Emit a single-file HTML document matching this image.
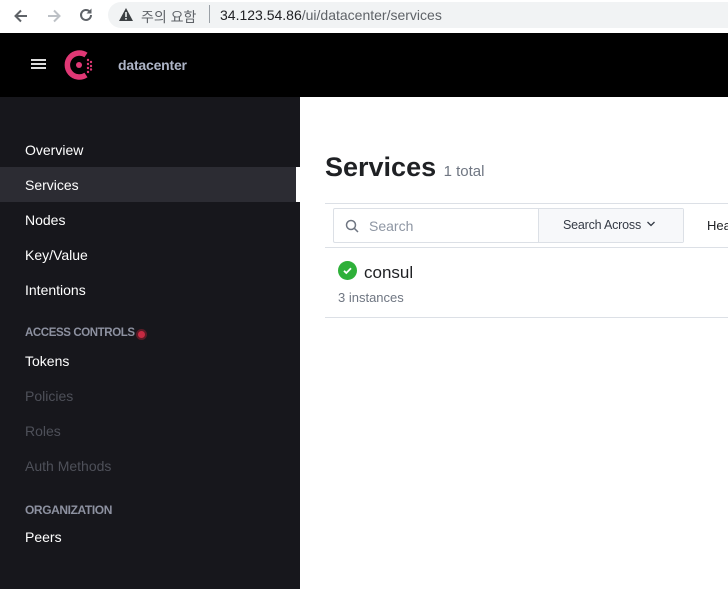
<!DOCTYPE html>
<html><head><meta charset="utf-8"><style>
*{margin:0;padding:0;box-sizing:border-box}
body{width:728px;height:589px;overflow:hidden;font-family:"Liberation Sans","Noto Sans CJK KR",sans-serif;background:#fff;position:relative}
.bar{position:absolute;left:0;top:0;width:728px;height:33px;background:#fff}
.url{position:absolute;left:108px;top:2px;width:640px;height:26px;background:#f1f3f4;border-radius:14px}
.hdr{position:absolute;left:0;top:33px;width:728px;height:64px;background:#000}
.side{position:absolute;left:0;top:97px;width:300px;height:492px;background:#17171c}
.nav{position:absolute;left:25px;font-size:14px;color:#fff}
.dim{color:#4e5059}
.sec{position:absolute;left:25px;font-size:12px;color:#8d91a0;font-weight:bold;letter-spacing:-0.4px}
.t{position:absolute;white-space:nowrap}
</style></head><body>
<div class="bar">
<svg class="t" style="left:12px;top:7px" width="18" height="18" viewBox="0 0 18 18"><path d="M15 9H4M9 3.5L3.5 9 9 14.5" stroke="#5f6368" stroke-width="2" fill="none"/></svg>
<svg class="t" style="left:45px;top:7px" width="18" height="18" viewBox="0 0 18 18"><path d="M3 9h11M9 3.5L14.5 9 9 14.5" stroke="#bdc1c6" stroke-width="2" fill="none"/></svg>
<svg class="t" style="left:77px;top:6px" width="18" height="18" viewBox="0 0 18 18"><path d="M14 9a5 5 0 1 1-1.5-3.6" stroke="#5f6368" stroke-width="2" fill="none"/><path d="M14.5 2.5v5h-5z" fill="#5f6368"/></svg>
<div class="url"></div>
<svg class="t" style="left:118px;top:7px" width="16" height="15" viewBox="0 0 16 15"><path d="M8 1L15 14H1z" fill="#3c4043"/><rect x="7.2" y="5" width="1.6" height="5" fill="#f1f3f4"/><rect x="7.2" y="11" width="1.6" height="1.6" fill="#f1f3f4"/></svg>
<div class="t" style="left:141px;top:7px;font-size:14px;color:#5f6368">주의 요함</div>
<div class="t" style="left:209px;top:5px;width:1px;height:18px;background:#9aa0a6"></div>
<div class="t" style="left:220px;top:7px;font-size:14px;color:#202124">34.123.54.86<span style="color:#5f6368">/ui/datacenter/services</span></div>
</div>
<div class="hdr">
<div class="t" style="left:31px;top:26px;width:15px;height:2px;background:#ddd;box-shadow:0 4px 0 #ddd,0 8px 0 #ddd"></div>
<svg class="t" style="left:63px;top:15px" width="34" height="34" viewBox="0 0 34 34"><path d="M23 7A12 12 0 1 0 23 27" stroke="#e03875" stroke-width="5.5" fill="none"/><circle cx="16" cy="17" r="3" fill="#e03875"/><g fill="#e03875"><circle cx="25" cy="12" r="1.2"/><circle cx="28" cy="14" r="1.2"/><circle cx="25" cy="16" r="1.2"/><circle cx="28" cy="18" r="1.2"/><circle cx="25" cy="20" r="1.2"/><circle cx="28" cy="21.5" r="1.2"/><circle cx="25" cy="24" r="1.2"/></g></svg>
<div class="t" style="left:118px;top:24px;font-size:14px;color:#aeb5c7;font-weight:bold;letter-spacing:-0.2px">datacenter</div>
</div>
<div class="side">
<div class="t" style="left:0;top:70px;width:296px;height:35px;background:#2c2c33"></div>
<div class="t" style="left:296px;top:70px;width:4px;height:35px;background:#fff"></div>
<div class="nav" style="top:45px">Overview</div>
<div class="nav" style="top:80px">Services</div>
<div class="nav" style="top:115px">Nodes</div>
<div class="nav" style="top:150px">Key/Value</div>
<div class="nav" style="top:185px">Intentions</div>
<div class="sec" style="top:230px;font-size:11.5px">ACCESS CONTROLS</div>
<div class="t" style="left:136px;top:232px;width:11px;height:11px;border-radius:50%;background:#c62a42;border:2px solid #5a1b26"></div>
<div class="nav" style="top:256px">Tokens</div>
<div class="nav dim" style="top:291px">Policies</div>
<div class="nav dim" style="top:326px">Roles</div>
<div class="nav dim" style="top:361px">Auth Methods</div>
<div class="sec" style="top:406px">ORGANIZATION</div>
<div class="nav" style="top:432px">Peers</div>
</div>
<div class="t" style="left:325px;top:152px;font-size:27px;font-weight:bold;color:#1f2124">Services <span style="font-size:15px;font-weight:normal;color:#6f7682">1 total</span></div>
<div class="t" style="left:325px;top:203px;width:403px;height:1px;background:#dce0e6"></div>
<div class="t" style="left:333px;top:208px;width:351px;height:35px;border:1px solid #dce0e6;border-radius:2px"></div>
<div class="t" style="left:538px;top:209px;width:145px;height:33px;background:#f7f8fa;border-left:1px solid #dce0e6"></div>
<svg class="t" style="left:345px;top:219px" width="14" height="14" viewBox="0 0 14 14"><circle cx="6" cy="6" r="4.5" stroke="#6f7682" stroke-width="1.5" fill="none"/><path d="M9.3 9.3L13 13" stroke="#6f7682" stroke-width="1.5"/></svg>
<div class="t" style="left:369px;top:218px;font-size:14px;color:#8e96a3">Search</div>
<div class="t" style="left:563px;top:218px;font-size:12.5px;color:#343a45;letter-spacing:-0.2px">Search Across</div>
<svg class="t" style="left:646px;top:220px" width="10" height="8" viewBox="0 0 10 8"><path d="M1.5 2L5 5.5 8.5 2" stroke="#343a45" stroke-width="1.3" fill="none"/></svg>
<div class="t" style="left:707px;top:218px;font-size:13px;color:#1f2124">Hea</div>
<div class="t" style="left:325px;top:247px;width:403px;height:1px;background:#dce0e6"></div>
<div class="t" style="left:338px;top:261px;width:19px;height:19px;border-radius:50%;background:#2eb039"></div>
<svg class="t" style="left:338px;top:261px" width="19" height="19" viewBox="0 0 19 19"><path d="M6 9.8l2.3 2.2L13 7.3" stroke="#fff" stroke-width="1.8" fill="none"/></svg>
<div class="t" style="left:364px;top:263px;font-size:17px;color:#1f2124">consul</div>
<div class="t" style="left:338px;top:290px;font-size:13px;color:#6f7682">3 instances</div>
<div class="t" style="left:325px;top:317px;width:403px;height:1px;background:#dce0e6"></div>
</body></html>
